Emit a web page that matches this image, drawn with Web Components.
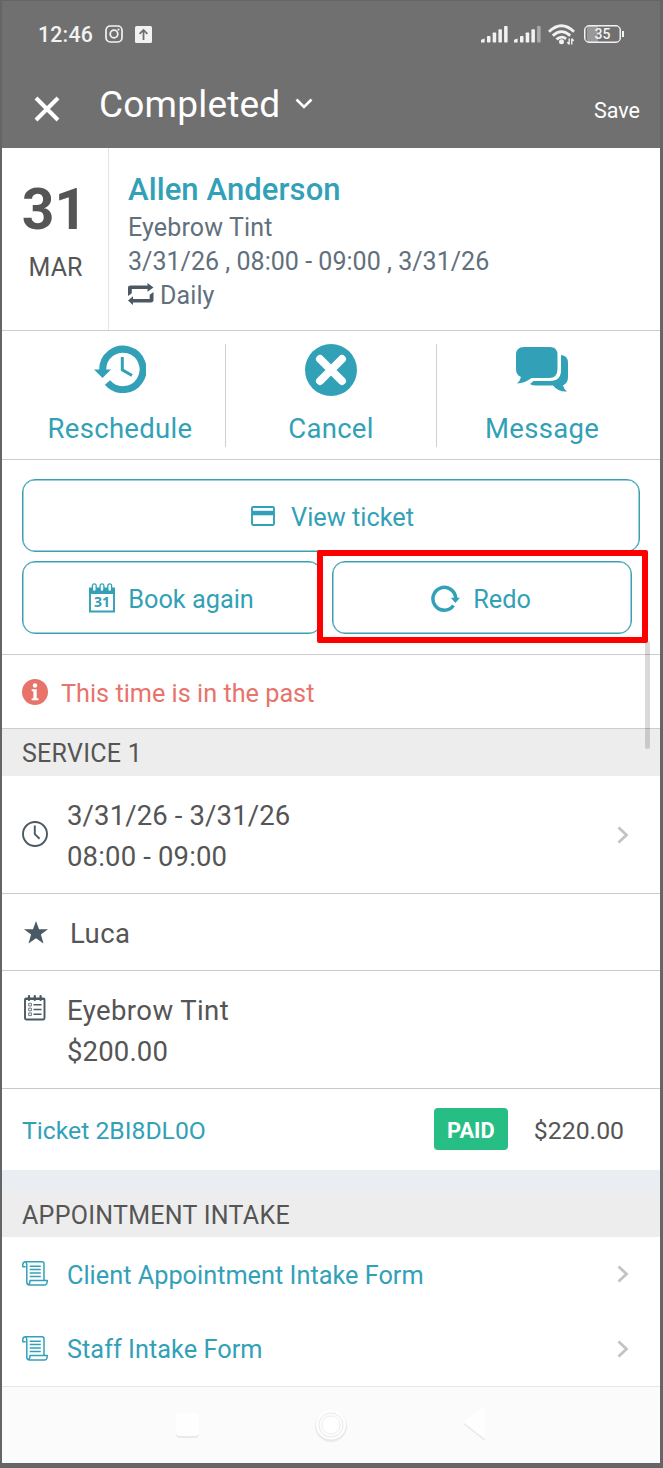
<!DOCTYPE html>
<html lang="en">
<head>
<meta charset="utf-8">
<title>Appointment</title>
<style>
html,body{margin:0;padding:0;background:#646665}
body{font-family:Roboto,"Liberation Sans",sans-serif;color:#555}
</style>
</head>
<body>
<appointment-screen></appointment-screen>
<script>
const ICONS = {
  insta: ['0 0 18 18', '<g fill="none" stroke="currentColor"><rect x="1" y="1" width="16" height="16" rx="4.2" stroke-width="1.7"/><circle cx="9" cy="9" r="3.8" stroke-width="1.8"/></g><circle cx="13.5" cy="4.6" r="1.1" fill="currentColor"/>'],
  upload: ['0 0 17 17', '<rect width="17" height="17" rx="1.5" fill="currentColor"/><path d="M8.5 14V4M4.6 7.8 8.5 3.9l3.9 3.9" fill="none" stroke="#707070" stroke-width="1.8"/>'],
  bars: ['0 0 27 18', '<g fill="currentColor"><path d="M0 17.5v-2q0-.6.6-.9l3-1v3.900z"/><rect x="6" y="11" width="3.500" height="6.500" rx=".7"/><rect x="11.700" y="7.500" width="3.500" height="10" rx=".7"/><rect x="17.400" y="4.200" width="3.500" height="13.300" rx=".7"/><rect class="last" x="23.100" y="1" width="3.500" height="16.500" rx=".7"/></g>'],
  wifi: ['0 0 27 21', '<g fill="none" stroke="currentColor" stroke-width="2.800"><path d="M1 7.700q12.500-12 25 0"/><path d="M4.800 11.600q8.700-8 17.400 0"/><path d="M8.500 15.400q5-4.300 9.500-.6"/></g><circle cx="13.500" cy="17.800" r="2.500" fill="currentColor"/><path d="M21.200 14.500v6M23.800 14.500v6M19.300 18.300l1.900 2M25.700 16.700l-1.900-2" stroke="currentColor" stroke-width="1.400" fill="none"/>'],
  close: ['0 0 26 26', '<path d="M2 2l22 22M24 2L2 24" stroke="currentColor" stroke-width="4" fill="none"/>'],
  down: ['0 0 18 12', '<path d="M1.500 1.500 9 9l7.500-7.500" stroke="currentColor" stroke-width="2.600" fill="none"/>'],
  repeat: ['0 0 26 22', '<g fill="currentColor"><path d="M0 13V5Q0 2.600 2.600 2.600H19.500V0L25.500 4.400 19.500 8.800V6H3.800V10.300z"/><path d="M25.500 9v8q0 2.400-2.600 2.400H5V22L0 17.600 5 13.200v2.800H21.700V11.700z"/></g>'],
  history: ['0 0 52 48', '<path d="M8.700 25A20.200 20.200 0 1 1 13.500 37.500" fill="none" stroke="currentColor" stroke-width="7"/><path d="M0 24.500H17L8.500 33z" fill="currentColor"/><path d="M28.300 12v12.800L38 30.500" fill="none" stroke="currentColor" stroke-width="3"/>'],
  cancel: ['0 0 52 52', '<circle cx="26" cy="26" r="26" fill="currentColor"/><path d="M15 15l22 22M37 15L15 37" stroke="#fff" stroke-width="8" stroke-linecap="round"/>'],
  chat: ['0 0 53 46', '<g fill="currentColor"><path d="M8 0H34Q41.500 0 41.500 8V22Q41.500 31 33 31H15.500Q9 36 1 36.500Q4 34 5 30Q0 28 0 22V8Q0 0 8 0z"/><path d="M45 8Q52 8.500 52 16V30Q52 36 47 38.500Q48 42.500 51 44.500Q42 45 37 38.500H20Q16 38.500 14 37L17.500 34H34Q45 34 45 23z"/></g>'],
  card: ['0 0 24 20', '<rect x="1" y="1" width="22" height="18" rx="1.200" fill="none" stroke="currentColor" stroke-width="1.900"/><path d="M1 4.800H23V9.300H1z" fill="currentColor"/>'],
  calendar: ['0 0 26 30', '<path d="M1 9V28.500H25V9" fill="none" stroke="currentColor" stroke-width="1.900"/><path d="M0 4.500H26V11H0z" fill="currentColor"/><g fill="#fff" stroke="currentColor" stroke-width="1.300"><rect x="3.400" y=".8" width="3.800" height="7.700" rx="1.900"/><rect x="11.100" y=".8" width="3.800" height="7.700" rx="1.900"/><rect x="18.800" y=".8" width="3.800" height="7.700" rx="1.900"/></g><text x="13" y="24.300" text-anchor="middle" font-family="Open Sans,sans-serif" font-weight="700" font-size="14" fill="currentColor">31</text>'],
  redo: ['0 0 29 27', '<path d="M22.500 20.500A11.400 11.400 0 1 1 24.700 13" fill="none" stroke="currentColor" stroke-width="3.500"/><path d="M19.800 12.800H29L24.400 18z" fill="currentColor"/>'],
  info: ['0 0 26 26', '<circle cx="13" cy="13" r="13" fill="currentColor"/><g fill="#fff"><circle cx="13" cy="6.500" r="2.200"/><path d="M9.700 10.300H14.700V19.300h1.800v1.900H9.700V19.300H11.400v-7.100H9.700z"/></g>'],
  clock: ['0 0 26 26', '<circle cx="13" cy="13" r="12" fill="none" stroke="currentColor" stroke-width="1.900"/><path d="M12.800 4.500v8.700l4.800 4.500" fill="none" stroke="currentColor" stroke-width="1.900"/>'],
  star: ['0 0 24 23', '<path d="M12 0l3 8.300h9l-7.100 5.300 2.600 9L12 17.300 4.500 22.600l2.600-9L0 8.300h9z" fill="currentColor"/>'],
  list: ['0 0 22 26', '<rect x="1" y="3.500" width="19.500" height="21" rx="1.200" fill="none" stroke="currentColor" stroke-width="1.900"/><path d="M1 3h20v2H1z" fill="currentColor"/><g fill="currentColor"><rect x="3.900" width="2.200" height="6" rx="1"/><rect x="9.700" width="2.200" height="6" rx="1"/><rect x="15.500" width="2.200" height="6" rx="1"/></g><path d="M9.500 9.700h8M9.500 14.500h8M9.500 19.300h8" stroke="currentColor" stroke-width="1.600"/><g fill="none" stroke="currentColor" stroke-width=".8"><path d="M4.700 8.300h2.700v2.700H4.700zM4.700 13.100h2.700v2.700H4.700zM4.700 17.900h2.700v2.700H4.700z"/></g>'],
  scroll: ['0 0 26 25', '<g fill="none" stroke="currentColor" stroke-width="1.500" stroke-linejoin="round"><path d="M3.700.8H20q2 0 2 2V19"/><path d="M3.700.8Q.8.800.8 3.600V5.800H3.700M3.500.8Q4.800 1.500 4.800 4V21Q4.800 24 7.500 24H22.500Q25.300 24 25.300 19.400H8Q8 24 5.500 23"/><path d="M7.700 5.200H18.800M7.700 8.600H18.800M7.700 12H18.800M7.700 15.400H18.800"/></g>'],
  next: ['0 0 12 18', '<path d="M1.500 1.500 9.500 9l-8 7.500" fill="none" stroke="currentColor" stroke-width="2.800"/>']
};

function define(name, css, html) {
  customElements.define(name, class extends HTMLElement {
    connectedCallback() {
      if (this.shadowRoot) return;
      this.attachShadow({mode: 'open'}).innerHTML = `<style>:host{display:block;box-sizing:border-box}${css}</style>${html}`;
    }
  });
}

customElements.define('ui-icon', class extends HTMLElement {
  connectedCallback() {
    if (this.shadowRoot) return;
    const [box, body] = ICONS[this.getAttribute('name')];
    const [, , vw, vh] = box.split(' ');
    const w = this.getAttribute('w') || vw, h = this.getAttribute('h') || vh;
    this.attachShadow({mode: 'open'}).innerHTML =
      `<style>:host{display:block;flex:none;width:${w}px;height:${h}px}svg{display:block}:host([weak]) .last{opacity:.45}</style>` +
      `<svg width="${w}" height="${h}" viewBox="${box}">${body}</svg>`;
  }
});

/* One line of text: size, tracking and line height come from attributes. */
customElements.define('ui-text', class extends HTMLElement {
  connectedCallback() {
    if (this.shadowRoot) return;
    const a = (n, d) => this.getAttribute(n) || d;
    this.attachShadow({mode: 'open'}).innerHTML =
      `<style>:host{display:block;flex:none;white-space:pre;font-size:${a('size', 25)}px;letter-spacing:${a('track', 0)}px;line-height:${a('line', 34)}px;font-weight:${a('weight', 400)}}</style><slot></slot>`;
  }
});

define('status-bar',
  ':host{display:flex;height:66px;align-items:center;padding:0 36px 0 36px;color:#f2f2f2}.sp{flex:1}.bat{display:flex;align-items:center}.cell{box-sizing:border-box;width:37px;height:18px;border:1.600px solid #f2f2f2;border-radius:5px;box-shadow:inset 0 0 0 .5px #f2f2f2;display:flex;justify-content:center;background:linear-gradient(90deg,#999 11px,transparent 11px) 2px 0 no-repeat}.tip{width:2px;height:6px;background:#f2f2f2;margin-left:1px}',
  `<ui-text size="21.3" weight="500" track=".2" style="margin-top:2px">12:46</ui-text>
   <ui-icon name="insta" style="margin-left:12px"></ui-icon>
   <ui-icon name="upload" style="margin-left:12px"></ui-icon>
   <span class="sp"></span>
   <ui-icon name="bars"></ui-icon>
   <ui-icon name="bars" weak style="margin-left:6px"></ui-icon>
   <ui-icon name="wifi" style="margin:0 9px 0 7px"></ui-icon>
   <span class="bat"><span class="cell"><ui-text size="14" line="17" weight="500">35</ui-text></span><span class="tip"></span></span>`);

define('title-bar',
  ':host{display:flex;height:81px;color:#fff}.sp{flex:1}',
  `<ui-icon name="close" style="margin:29px 0 0 32px"></ui-icon>
   <ui-text size="37" line="50" track=".2" style="margin:13px 0 0 39px">Completed</ui-text>
   <ui-icon name="down" style="margin:31px 0 0 15px"></ui-icon>
   <span class="sp"></span>
   <ui-text size="21.5" line="30" style="margin:29px 20px 0 0">Save</ui-text>`);

define('date-summary',
  ':host{display:flex;height:183px;border-bottom:1px solid #ccc}.day{width:107px;box-sizing:border-box;border-right:1px solid #e4e4e4;text-align:center;padding-top:32px}.info{padding:22px 0 0 19px;color:#61707c}.rep{display:flex;align-items:center;gap:6px}ui-icon{color:#4d5962}',
  `<div class="day"><ui-text size="57" line="60" weight="700" style="margin-left:-1px">31</ui-text><ui-text size="25" line="34" style="margin:11px 0 0 1px">MAR</ui-text></div>
   <div class="info"><ui-text size="31" line="40" weight="500" track=".1" style="color:#32a1b7;margin-bottom:1px">Allen Anderson</ui-text>
   <ui-text track=".15">Eyebrow Tint</ui-text><ui-text track=".03">3/31/26 , 08:00 - 09:00 , 3/31/26</ui-text>
   <div class="rep"><ui-icon name="repeat" style="margin-top:-5px"></ui-icon><ui-text track=".1">Daily</ui-text></div></div>`);

define('action-item',
  ':host{display:flex;flex-direction:column;align-items:center;height:103px;border-right:1px solid #d0d0d0}:host([end]){border:0}.i{height:52px;display:flex;align-items:center;margin-bottom:16px}',
  '<span class="i"><slot name="icon"></slot></span><slot></slot>');

define('action-bar',
  ':host{display:grid;grid-template-columns:224px 211px 223px;height:129px;padding-top:13px;border-bottom:1px solid #ccc;color:#32a1b7}',
  `<action-item style="padding-left:13px"><ui-icon slot="icon" name="history" style="margin-top:-2px"></ui-icon><ui-text size="27.5" track=".3">Reschedule</ui-text></action-item>
   <action-item><ui-icon slot="icon" name="cancel"></ui-icon><ui-text size="27.5" track=".3">Cancel</ui-text></action-item>
   <action-item end style="padding-right:13px"><ui-icon slot="icon" name="chat"></ui-icon><ui-text size="27.5" track=".3">Message</ui-text></action-item>`);

define('outline-button',
  ':host{display:flex;align-items:center;justify-content:center;height:73px;border:1px solid #3a9fb3;box-shadow:inset 0 0 0 .5px #3a9fb3;border-radius:13px;color:#32a1b7}',
  '<slot></slot>');

define('highlight-box',
  ':host{position:absolute;left:-15px;top:-11px;width:331px;height:93px;border:6px solid #f00;border-radius:2px;z-index:2}', '');

define('button-panel',
  ':host{height:195px;padding:19px 20px 0;border-bottom:1px solid #ccc}.row{display:grid;grid-template-columns:300px 300px;gap:10px;margin-top:9px}.hl{position:relative}',
  `<outline-button style="padding-left:3px"><ui-icon name="card"></ui-icon><ui-text size="25.3" style="margin:4px 0 0 16px">View ticket</ui-text></outline-button>
   <div class="row"><outline-button><ui-icon name="calendar"></ui-icon><ui-text size="25.3" style="margin:4px 1px 0 13px">Book again</ui-text></outline-button>
   <div class="hl"><outline-button><ui-icon name="redo" style="margin-top:1px"></ui-icon><ui-text size="25.3" style="margin:4px 2px 0 13px">Redo</ui-text></outline-button><highlight-box></highlight-box></div></div>`);

define('past-notice',
  ':host{display:flex;align-items:center;height:74px;padding:2px 0 0 20px;border-bottom:1px solid #ccc;color:#e8736b}',
  '<ui-icon name="info" style="margin-top:-2px"></ui-icon><ui-text size="25.25" style="margin:2px 0 0 13px">This time is in the past</ui-text>');

define('section-title',
  ':host{height:47px;padding:8px 0 0 20px;background:#ededed;color:#555}', '<slot></slot>');

define('list-row',
  ':host{display:flex;border-bottom:1px solid #c9c9c9;padding:0 31px 0 20px;color:#555}.icon{width:45px;flex:none;color:#4a5963}.body{flex:1}ui-icon.next{color:#c3c3c3;align-self:center}:host([link]){border-color:transparent;color:#32a1b7}:host([link]) .icon{color:#32a1b7}:host([plain]) .next{display:none}',
  '<div class="icon"><slot name="icon"></slot></div><div class="body"><slot></slot></div><ui-icon class="next" name="next"></ui-icon>');

define('ticket-row',
  ':host{display:flex;align-items:center;height:81px;padding:2px 36px 0 20px;color:#32a1b7}.paid{box-sizing:border-box;width:74px;height:42px;border-radius:4px;background:#27be85;color:#fff;display:flex;justify-content:center;align-items:center;margin:0 26px 4px auto}',
  '<ui-text size="24.75">Ticket 2BI8DL0O</ui-text><div class="paid"><ui-text size="21.8" weight="700" style="padding-top:4px">PAID</ui-text></div><ui-text size="24.8" style="color:#555;margin-top:1px">$220.00</ui-text>');

define('nav-bar',
  ':host{display:flex;height:77px;border-top:1px solid #e6e6e6;background:#fbfbfb}svg{display:block}',
  `<svg width="658" height="76" viewBox="0 0 658 76"><g fill="#eaeaea"><rect x="174" y="28" width="23" height="23" rx="4"/><circle cx="329" cy="39" r="16"/><path d="M461 37 483 54V21z"/></g><g fill="#fefefe"><rect x="174" y="26" width="23" height="23" rx="4"/><circle cx="329" cy="37.500" r="15"/><path d="M461 35 483 52V19z"/></g><circle cx="329" cy="38" r="12" fill="#fdfdfd" stroke="#e9e9e9"/><circle cx="329" cy="38" r="9" fill="#fff" stroke="#eee"/></svg>`);

define('appointment-screen',
  ':host{width:663px;height:1468px;padding:1px 3px 0 2px;background:#646665}header{background:#707070;height:147px}main{background:#fff;position:relative}.scroll{position:absolute;left:643px;top:493px;width:5px;height:108px;border-radius:3px;background:rgba(0,0,0,.15);z-index:1}.gap{height:21px;background:#eaedf2}',
  `<header><status-bar></status-bar><title-bar></title-bar></header>
   <main><date-summary></date-summary><action-bar></action-bar><button-panel></button-panel><past-notice></past-notice>
   <section-title><ui-text track=".25">SERVICE 1</ui-text></section-title>
   <list-row style="height:118px"><ui-icon slot="icon" name="clock" style="margin-top:45px"></ui-icon><ui-text size="27.5" line="41" track=".13" style="margin-top:19px">3/31/26 - 3/31/26</ui-text><ui-text size="27.5" line="41" track=".15">08:00 - 09:00</ui-text></list-row>
   <list-row plain style="height:77px"><ui-icon slot="icon" name="star" style="margin:27px 0 0 2px"></ui-icon><ui-text size="27.5" line="40" track=".4" style="margin:20px 0 0 3px">Luca</ui-text></list-row>
   <list-row plain style="height:118px"><ui-icon slot="icon" name="list" style="margin:24px 0 0 2px"></ui-icon><ui-text size="27.5" line="41" track=".42" style="margin-top:19px">Eyebrow Tint</ui-text><ui-text size="27.5" line="41" track=".15">$200.00</ui-text></list-row>
   <ticket-row></ticket-row><div class="gap"></div>
   <section-title style="height:46px"><ui-text track=".28">APPOINTMENT INTAKE</ui-text></section-title>
   <list-row link style="height:75px"><ui-icon slot="icon" name="scroll" style="margin-top:24px"></ui-icon><ui-text size="25.3" style="margin-top:22px">Client Appointment Intake Form</ui-text></list-row>
   <list-row link style="height:74px"><ui-icon slot="icon" name="scroll" style="margin-top:24px"></ui-icon><ui-text size="25.3" track=".03" style="margin-top:21px">Staff Intake Form</ui-text></list-row>
   <nav-bar></nav-bar><div class="scroll"></div></main>`);
</script>
</body>
</html>
